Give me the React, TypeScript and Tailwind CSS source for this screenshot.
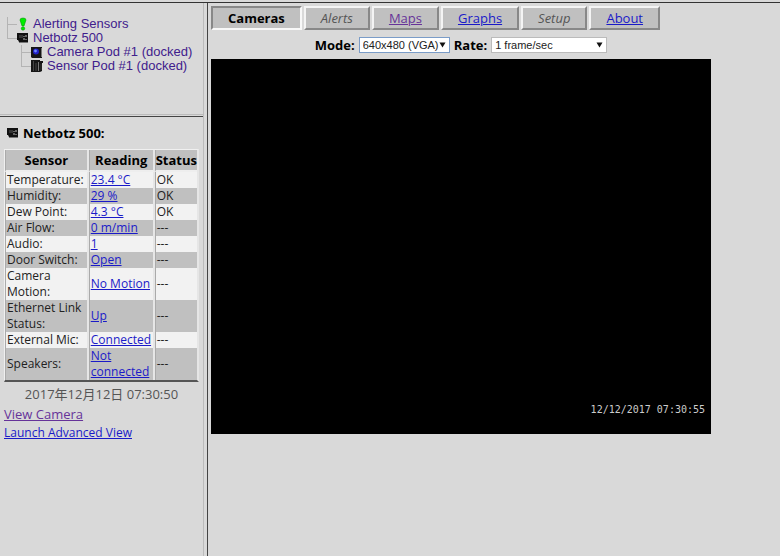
import { useState } from 'react';
import type { ReactNode } from 'react';

const tabs = [
  { label: 'Cameras', state: 'active' },
  { label: 'Alerts', state: 'disabled' },
  { label: 'Maps', state: 'visited' },
  { label: 'Graphs', state: 'link' },
  { label: 'Setup', state: 'disabled' },
  { label: 'About', state: 'link' },
];

const sensors = [
  { name: 'Temperature:', reading: '23.4 °C', status: 'OK' },
  { name: 'Humidity:', reading: '29 %', status: 'OK' },
  { name: 'Dew Point:', reading: '4.3 °C', status: 'OK' },
  { name: 'Air Flow:', reading: '0 m/min', status: '---' },
  { name: 'Audio:', reading: '1', status: '---' },
  { name: 'Door Switch:', reading: 'Open', status: '---' },
  { name: 'Camera Motion:', reading: 'No Motion', status: '---' },
  { name: 'Ethernet Link Status:', reading: 'Up', status: '---' },
  { name: 'External Mic:', reading: 'Connected', status: '---' },
  { name: 'Speakers:', reading: 'Not connected', status: '---' },
];

function AlertIcon() {
  return (
    <svg width="12" height="14" viewBox="0 0 12 14" className="shrink-0">
      <path d="M3 3 Q3 1 6 1 Q9 1 9 3 L7 9 H5 Z" fill="#00ee00" stroke="#0a9a0a" strokeWidth="0.6" />
      <circle cx="6" cy="11.5" r="1.7" fill="#00ee00" stroke="#0a9a0a" strokeWidth="0.6" />
    </svg>
  );
}

function DeviceIcon() {
  return (
    <svg width="12" height="12" viewBox="0 0 12 12" className="shrink-0">
      <path d="M0 1 H11 V10 H2 L1 8 H0 Z" fill="#111" />
      <path d="M2 3 H6 V6 H2 Z" fill="#333" />
      <path d="M6 7 H8 M9 3 V5 M7 4 V5 M9 7 V8" stroke="#bbb" />
      <path d="M2 10.5 H11" stroke="#777" />
    </svg>
  );
}

function CameraPodIcon() {
  return (
    <svg width="12" height="13" viewBox="0 0 12 13" className="shrink-0">
      <path d="M0 1 H11 V12 H1 L0 11 Z" fill="#151515" />
      <circle cx="5" cy="5.5" r="3" fill="#2020c8" />
      <circle cx="4.5" cy="5" r="1.4" fill="#7088ff" />
      <path d="M10.5 2 V11" stroke="#777" />
    </svg>
  );
}

function SensorPodIcon() {
  return (
    <svg width="12" height="14" viewBox="0 0 12 14" className="shrink-0">
      <path d="M0 1 H9 V2 H12 V4 H11 V12 L9 13 H0 Z" fill="#151515" />
      <path d="M2.5 2 V12 M5 4 V12" stroke="#444" />
      <path d="M7.5 3 V12" stroke="#777" />
      <path d="M10 5 V11" stroke="#333" />
    </svg>
  );
}

function TreeBranch({ last = false }: { last?: boolean }) {
  return (
    <svg width="10" height="14" viewBox="0 0 10 14" className="shrink-0" shapeRendering="crispEdges">
      <path d={last ? 'M0.5 0 V7.5 H10' : 'M0.5 0 V14 M0.5 7.5 H10'} fill="none" stroke="#b4b4b4" />
    </svg>
  );
}

function TreeItem({ icon, label, last }: { icon: ReactNode; label: string; last?: boolean }) {
  return (
    <a href="#" className="flex h-[14px] items-center gap-1 whitespace-nowrap text-[#40208c]">
      <span className="flex items-center">
        <TreeBranch last={last} />
        {icon}
      </span>
      {label}
    </a>
  );
}

function Picker({ id, options, className }: { id: string; options: string[]; className: string }) {
  const [value, setValue] = useState(options[0]);

  return (
    <span className="relative flex items-center">
      <select
        id={id}
        value={value}
        onChange={(e) => setValue(e.target.value)}
        className={`h-4 appearance-none border bg-white pl-[3px] font-['Liberation_Sans'] text-[11px] leading-[14px] font-normal text-[#222] outline-none ${className}`}
      >
        {options.map((option) => (
          <option key={option}>{option}</option>
        ))}
      </select>
      <svg width="7" height="6" viewBox="0 0 7 6" className="pointer-events-none absolute right-1">
        <path d="M0.5 0.5 H6.5 L3.5 5.5 Z" fill="#111" />
      </svg>
    </span>
  );
}

function Tab({ label, state }: { label: string; state: string }) {
  const base = 'border-2 px-[15px] text-[13px] leading-5';

  if (state === 'active') {
    return (
      <button className={`${base} border-t-[#888] border-l-[#888] border-r-[#f8f8f8] border-b-[#f8f8f8] bg-[#c0c0c0] font-bold text-black`}>
        {label}
      </button>
    );
  }
  if (state === 'disabled') {
    return (
      <button className={`${base} border-t-[#f4f4f4] border-l-[#f4f4f4] border-r-[#888] border-b-[#888] bg-[#c0c0c0] text-[#555] italic`}>
        {label}
      </button>
    );
  }
  return (
    <a
      href="#"
      className={`${base} border-t-[#f4f4f4] border-l-[#f4f4f4] border-r-[#888] border-b-[#888] bg-[#c0c0c0] underline ${state === 'visited' ? 'text-[#663399]' : 'text-[#1a1ac8]'}`}
    >
      {label}
    </a>
  );
}

function SensorTable() {
  const cell = 'border-l border-l-[#aaa] border-r-2 border-r-[#e6e6e6] px-px';

  return (
    <table className="w-full border-separate border-spacing-0 border-t border-r-2 border-b-2 border-l border-t-[#f0f0f0] border-r-[#e6e6e6] border-b-[#555] border-l-[#f0f0f0] text-left text-xs text-[#222]">
      <thead>
        <tr className="bg-[#c0c0c0] text-center text-[13px] leading-5 text-black">
          <th className={`${cell} w-[84px] border-b-2 border-b-[#eee]`}>Sensor</th>
          <th className={`${cell} w-[66px] border-b-2 border-b-[#eee]`}>Reading</th>
          <th className="border-b-2 border-l border-b-[#eee] border-l-[#aaa]">Status</th>
        </tr>
      </thead>
      <tbody>
        {sensors.map((sensor) => (
          <tr key={sensor.name} className="h-4 leading-4 odd:bg-[#f2f2f2] even:bg-[#c0c0c0]">
            <td className={cell}>{sensor.name}</td>
            <td className={cell}>
              <a href="#" className="text-[#1a1ac8] underline">{sensor.reading}</a>
            </td>
            <td className="border-l border-l-[#aaa] px-px">{sensor.status}</td>
          </tr>
        ))}
      </tbody>
    </table>
  );
}

export default function App() {
  return (
    <div className="flex min-h-screen flex-col bg-[#d9d9d9] pt-0.5 font-['Open_Sans','Noto_Sans_CJK_SC',sans-serif] text-[13px] text-black">
      <div className="flex flex-1 border-t border-[#333]">
        <aside className="flex w-[204px] shrink-0 flex-col border-r border-[#bbb]">
          <nav className="h-[112px] border-b border-[#bbb] pt-3.5 pl-[7px] font-['Liberation_Sans'] text-[13px]">
            <TreeItem icon={<AlertIcon />} label="Alerting Sensors" />
            <TreeItem icon={<DeviceIcon />} label="Netbotz 500" last />
            <div className="pl-3.5">
              <TreeItem icon={<CameraPodIcon />} label="Camera Pod #1 (docked)" />
              <TreeItem icon={<SensorPodIcon />} label="Sensor Pod #1 (docked)" last />
            </div>
          </nav>
          <section className="mt-px flex-1 border-t border-[#444] pt-1.5 pr-1 pl-1">
            <h1 className="flex items-center gap-1 px-[3px] pb-1.5 text-[13px] leading-5 font-bold">
              <DeviceIcon />
              Netbotz 500:
            </h1>
            <SensorTable />
            <p className="pt-0.5 text-center text-[13px] leading-5 text-[#555]">2017年12月12日 07:30:50</p>
            <a href="#" className="block text-[13px] leading-5 text-[#663399] underline">View Camera</a>
            <a href="#" className="block text-xs leading-[18px] text-[#1a1ac8] underline">Launch Advanced View</a>
          </section>
        </aside>
        <main className="ml-[3px] flex-1 border-l border-[#444] pt-[3px] pl-[3px]">
          <nav className="flex gap-0.5">
            {tabs.map((tab) => (
              <Tab key={tab.label} label={tab.label} state={tab.state} />
            ))}
          </nav>
          <div className="max-w-[500px]">
            <form className="flex items-center justify-center gap-1 pt-[5px] pb-1 text-[13px] leading-5 font-bold">
              <label htmlFor="mode">Mode:</label>
              <Picker id="mode" options={['640x480 (VGA)', '320x240 (QVGA)']} className="w-[91px] border-[#7a9cc8]" />
              <label htmlFor="rate">Rate:</label>
              <Picker id="rate" options={['1 frame/sec', '5 frames/sec']} className="w-[116px] border-[#bbb]" />
            </form>
            <div className="flex aspect-[4/3] items-end justify-end bg-black px-1.5 py-[17px] font-['DejaVu_Sans_Mono'] text-[10px] text-[#ccc]">
              12/12/2017 07:30:55
            </div>
          </div>
        </main>
      </div>
    </div>
  );
}
